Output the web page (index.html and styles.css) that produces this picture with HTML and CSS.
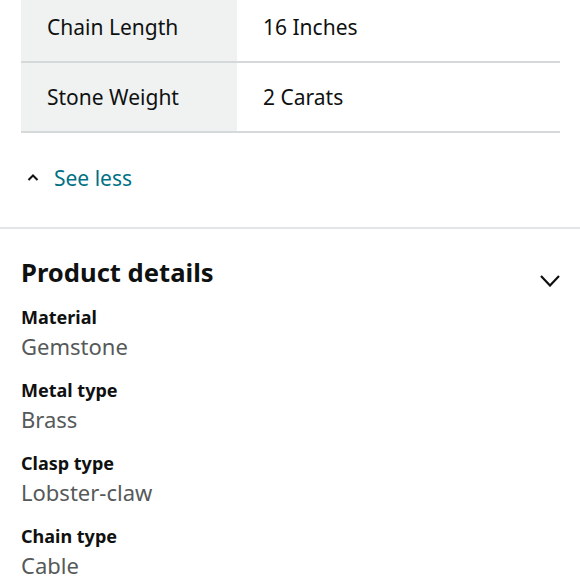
FILE: index.html
```html
<!DOCTYPE html>
<html>
<head>
<meta charset="utf-8">
<link rel="stylesheet" href="styles.css">
</head>
<body>
<div class="spec">
  <div class="row">
    <div class="key">Chain Length</div>
    <div class="val">16 Inches</div>
  </div>
  <div class="row">
    <div class="key">Stone Weight</div>
    <div class="val">2 Carats</div>
  </div>
</div>
<div class="toggle">
  <svg class="caret" width="12" height="7" viewBox="0 0 12 7"><path d="M1.5 6 L6 1.5 L10.5 6" fill="none" stroke="#0f1111" stroke-width="2"/></svg>
  <span class="link">See less</span>
</div>
<div class="section">
  <div class="head">
    <h2 class="title">Product details</h2>
    <svg class="chev" width="20" height="12" viewBox="0 0 20 12"><path d="M1 1 L10 10.5 L19 1" fill="none" stroke="#0f1111" stroke-width="2.2"/></svg>
  </div>
  <dl class="details">
    <dt>Material</dt><dd>Gemstone</dd>
    <dt>Metal type</dt><dd>Brass</dd>
    <dt>Clasp type</dt><dd>Lobster-claw</dd>
    <dt>Chain type</dt><dd>Cable</dd>
  </dl>
</div>
</body>
</html>
```
FILE: styles.css
```css
html, body {
  margin: 0;
  padding: 0;
  background: #fff;
  font-family: "Noto Sans", "Open Sans", sans-serif;
  color: #0f1111;
  overflow: hidden;
}
.spec {
  margin: -7px 20px 0 21px;
}
.row {
  display: flex;
  height: 68px;
  border-bottom: 2px solid #d5d9d9;
}
.key {
  width: 190px;
  padding-left: 26px;
  background: #f0f2f2;
  display: flex;
  align-items: center;
  font-size: 21px;
}
.val {
  flex: 1;
  padding-left: 26px;
  display: flex;
  align-items: center;
  font-size: 21px;
}
.toggle {
  display: flex;
  align-items: center;
  height: 90px;
  padding: 0 0 4px 27px;
  border-bottom: 2px solid #e3e6e6;
}
.caret {
  margin-right: 15px;
  margin-top: -2px;
}
.link {
  color: #007185;
  font-size: 21px;
}
.section {
  padding: 0 20px 0 21px;
}
.head {
  display: flex;
  align-items: center;
  justify-content: space-between;
  margin-top: 26px;
}
.title {
  margin: 0;
  font-size: 25.6px;
  font-weight: 700;
}
.chev {
  margin-top: 16px;
}
.details {
  margin: 14px 0 0;
}
.details dt {
  font-size: 18px;
  font-weight: 700;
  line-height: 26px;
}
.details dd {
  margin: 2px 0 17px;
  font-size: 22px;
  color: #565959;
  line-height: 28px;
}
```
